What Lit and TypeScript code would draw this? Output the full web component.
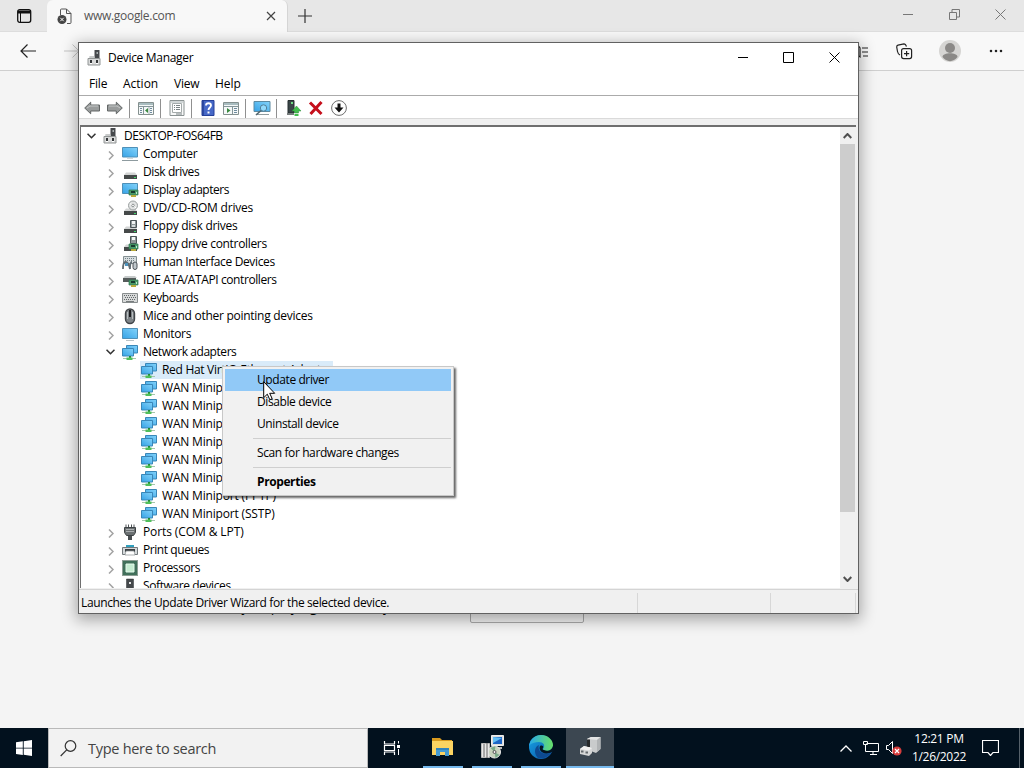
import { LitElement, html, css, svg } from "lit";
import { customElement, property } from "lit/decorators.js";

const monitor = svg`<defs><linearGradient id="m" x1="0" y1="1" x2="1" y2="0"><stop offset="0" stop-color="#35a2e6"/><stop offset="1" stop-color="#84d3fa"/></linearGradient></defs>`;
const drive = svg`<path d="M2 11 4 8.500h9l2 2.500z" fill="#d2d4d4"/><path d="M2 11h13v4H2z" fill="#454949"/><path d="M12 13h2v1h-2z" fill="#42d66b"/>`;
const card = svg`<path d="M7 8h9v5H7z" fill="#4a9a68" stroke="#2c7550" stroke-width=".7"/><path d="M9 13h5v2H9z" fill="#b8aa3c"/><path d="M9 9h4v2H9z" fill="#173d30"/><path d="M14 10h1v2h-1z" fill="#b8e9cc"/>`;
const panes = svg`<path d="M.5 2.500h15v12H.5z" fill="#f5f8f8" stroke="#84908f"/><path d="M1 3h14v2H1z" fill="#a9bdc0"/><path d="M1 6.500h14" stroke="#849599"/>`;

const icons: Record<string, unknown> = {
  manager: svg`<path d="M7.500 0h5v8h-5z" fill="#46494c"/><path d="M9.500 2H11v2H9.500z" fill="#a8afb0"/><path d="M2.500 6H7l1 3H2z" fill="#c8caca"/><path d="M1 8.500h12V15H1z" fill="#d9dada" stroke="#929696"/><path d="M3 10h2v3H3zM9 10h2v3H9z" fill="#333638"/><path d="M3 13h2v1H3zM9 13h2v1H9z" fill="#fff"/>`,
  computer: svg`${monitor}<path d="M.5 1.500h15v9.500H.5z" fill="url(#m)" stroke="#4f90b8"/><path d="M5 12.500h6" stroke="#d3d8d9"/><path d="M0 14.500h16" stroke="#8e9b9f"/>`,
  monitor: svg`${monitor}<path d="M.5 2.500h15v10H.5z" fill="url(#m)" stroke="#4f90b8"/><path d="M4 14.500h8" stroke="#b9c3c7"/>`,
  disk: drive,
  display: svg`${monitor}<path d="M.5 1.500h15v10H.5z" fill="url(#m)" stroke="#4f90b8"/>${card}`,
  dvd: svg`${drive}<circle cx="11" cy="5.500" r="4.500" fill="#e1e3e3" stroke="#9ba0a0"/><path d="m8 3.500 2 1.500M12 6l2 2" stroke="#fff"/><circle cx="11" cy="5.500" r="1.300" fill="#fff" stroke="#8d9292"/>`,
  floppy: svg`${drive}<path d="M8.500 2.500h6v7h-6z" fill="#8f9799" stroke="#4c5558"/><path d="M10 3h3v3h-3z" fill="#f2f4f4"/><path d="M10 7h3v2h-3z" fill="#d5dbdc"/>`,
  floppyctl: svg`${drive}<path d="M8.500.5h6v7h-6z" fill="#8f9799" stroke="#4c5558"/><path d="M10 1h3v3h-3z" fill="#f2f4f4"/>${card}`,
  hid: svg`<path d="M1.500 2.500h13v7h-13z" fill="#d7dddf" stroke="#849093"/><path d="M3 4.500h10M3 6.500h10" stroke="#718187" stroke-dasharray="1 1"/><path d="M1 15c0-5 1-7 2.500-7S7 10 8 15M8 15c0-5 1-7 2-7" fill="none" stroke="#5f6b72" stroke-width="1.800"/><path d="M3 9h3v3H3z" fill="#4f94bd"/><rect x="11" y="8" width="4" height="7.500" rx="2" fill="#bec6cb" stroke="#4c5358"/>`,
  ide: svg`<path d="m1 6 2-2h10l2 2z" fill="#c6caca"/><path d="M1 6h13v4H1z" fill="#555b5b"/>${card}`,
  keyboard: svg`<path d="M.5 3.500h15v9H.5z" fill="#d7d9d9" stroke="#888d8e"/><path d="M2 5.500h12M3 7.500h11M2 9.500h12" stroke="#616769" stroke-dasharray="1 1"/><path d="M4 11.500h8" stroke="#777c7d"/>`,
  mouse: svg`<rect x="3.500" y="1" width="9" height="14.500" rx="4.500" fill="#7e8488" stroke="#414549" stroke-width="1.400"/><path d="M5.500 4v7M10.500 4v7" stroke="#b8bdbf"/><path d="M8 2v7" stroke="#1c1e20" stroke-width="2"/>`,
  network: svg`${monitor}<path d="M4.500 1.500h11v7.500h-11z" fill="url(#m)" stroke="#3a87b8"/><path d="M.5 4.500h11V12H.5z" fill="url(#m)" stroke="#3a87b8"/><path d="M7 12h2v2H7z" fill="#218d36"/><path d="M1 14.500h13" stroke="#a5c8ab"/><path d="M4.500 13.500h6V16h-6z" fill="#4fbf5a"/>`,
  port: svg`<path d="M4 .5v3M6.500.5v3M9.500.5v3M12 .5v3" stroke="#505558"/><path d="M2.500 3.500h11v5l-2 3h-7l-2-3z" fill="#6b7072" stroke="#3d4244"/><path d="M4 5.500h8M4 7.500h8" stroke="#aaaeb0"/><path d="M6 12h4v4H6z" fill="#494e51"/>`,
  printer: svg`<path d="M4 3h8v4H4z" fill="#2f9fbd"/><path d="M.5 5.500h15v7H.5z" fill="#d4d8da" stroke="#72797c"/><path d="M3 7h10v3H3z" fill="#383e41"/><path d="M4 9h8l1 4H3z" fill="#fff" stroke="#899092" stroke-width=".7"/>`,
  cpu: svg`<path d="M1 1h14v14H1z" fill="#41705a"/><path d="M.5.5h15v15H.5z" fill="none" stroke="#183d29" stroke-dasharray="1 1"/><path d="M4 4h8v8H4z" fill="#c5ecd1" stroke="#e4faeb"/>`,
  software: svg`<path d="M4.500 1h7v15h-7z" fill="#44484b" stroke="#2d3033" stroke-width=".5"/><path d="M7 4h2v2H7z" fill="#e5e6e7"/>`,
  left: svg`<path d="m.7 8 6-5.800V5h8.800v6H6.700v2.800z" fill="#999c9c" stroke="#626666"/><path d="m3 8 3-2h8" stroke="#c6c8c8" fill="none"/>`,
  right: svg`<path d="m15.300 8-6-5.800V5H.5v6h8.800v2.800z" fill="#999c9c" stroke="#626666"/><path d="M2 6h8l3 2" stroke="#c6c8c8" fill="none"/>`,
  tree: svg`${panes}<path d="M5.500 7v7" stroke="#849599"/><path d="M2 8.500h2M2 10.500h2M2 12.500h2M12 8.500h2M12 10.500h2M12 12.500h2" stroke="#6f8b9e"/><path d="M10 8v5L7 10.500z" fill="#38883e"/><path d="M11 7v7" stroke="#a8b6b9"/>`,
  actionpane: svg`${panes}<path d="M9.500 7v7" stroke="#849599"/><path d="M11 8.500h3M11 10.500h3M11 12.500h3" stroke="#6f8b9e"/><path d="M4 8v5l3.500-2.500z" fill="#38883e"/>`,
  props: svg`<path d="M1 .5h14v15H1z" fill="#f7f8f8" stroke="#8a9292"/><path d="M3.500 3.500h9v9h-9z" fill="#fff" stroke="#a4abab"/><path d="M2 2h12" stroke="#a9b3b5"/><path d="M5 5.500h1M7 5.500h4M5 7.500h1M7 7.500h4M5 9.500h1M7 9.500h4M7 14h6" stroke="#798284"/>`,
  help: svg`<path d="M2 .5h12v15H2z" fill="#4668c7" stroke="#243f99"/><path d="M3 1v14" stroke="#253f96" stroke-width="1.500"/><path d="M6 5.500C6 2.500 11 2.500 11 5.500c0 2-2.500 2-2.500 4.500" stroke="#fff" stroke-width="1.800" fill="none"/><path d="M7.500 11.500h2v2h-2z" fill="#fff"/>`,
  scan: svg`${monitor}<path d="M0 1.500h16v10H0z" fill="url(#m)" stroke="#5d8aa1"/><path d="M2 14.500h13" stroke="#919b9e"/><circle cx="9.500" cy="8" r="3.200" fill="#a4e4ff" fill-opacity=".75" stroke="#51809a"/><path d="m7 10.500-5 4.500" stroke="#51666f" stroke-width="1.600"/>`,
  update: svg`<path d="M3 .5h6V13H3z" fill="#3b4648" stroke="#242d2e"/><path d="M6 2h2v2H6z" fill="#70da84"/><path d="M2 13h7v2H2z" fill="#777d7d"/><path d="m11.500 6 4.500 5h-2.500v2h-4v-2H7z" fill="#43be4e" stroke="#2a8b36" stroke-width=".5"/><path d="M9.500 15h4" stroke="#43be4e" stroke-width="2"/>`,
  remove: svg`<path d="M2 2.500 13.500 14M13.500 2 2.500 14" stroke="#c50f1c" stroke-width="3"/>`,
  disable: svg`<circle cx="8" cy="8" r="7.400" fill="#fff" stroke="#6e6e6e"/><path d="M6.500 3.500h3v4h3L8 12.500 3.500 7.500h3z" fill="#111"/>`,
  cursor: svg`<path d="M.7.700v16l3.600-3.500 2.500 5.500 2.400-1-2.500-5.400h5z" fill="#fff" stroke="#000"/>`,
  avatar: svg`<circle cx="11" cy="11" r="11" fill="#d6d5d3"/><circle cx="11" cy="8" r="5" fill="#8b8987"/><path d="M3.500 17c0-5 15-5 15 0-4 5.500-11 5.500-15 0z" fill="#8b8987"/>`,
  start: svg`<path d="m0 2.300 6.800-1v6.400H0zM7.700 1.200 16 0v7.700H7.700zM0 8.600h6.800V15L0 14zM7.700 8.600H16V16l-8.300-1.200z" fill="#fff"/>`,
  taskview: svg`<path d="M.5 1v3h10V1M.5 15v-3h10v3M.5 5.500h10v5H.5z" fill="none" stroke="#fff" stroke-width="1.200"/><path d="M14.500 1v2.500M14.500 9v6" stroke="#fff"/><path d="M13 5h3v3h-3z" fill="#fff"/>`,
  explorer: svg`<path d="M1 3h8l2 2h10v4H1z" fill="#d99b1f"/><path d="M1 6h21v14H1z" fill="#fcd462"/><path d="M5 21v-8h13v8h-4v-4H9v4z" fill="#459bd2"/><path d="M5 13h13v2H5z" fill="#3284bd"/>`,
  installer: svg`<path d="M11.500.5h12v10h-12z" fill="#ddd" stroke="#eee"/><path d="M13 2h9v7h-9z" fill="#1c65c6"/><path d="m13 2 9 1-9 5z" fill="#64bff5"/><path d="M14 12h8v2h-8z" fill="#bbb"/><path d="M1.500 8.500h8v14h-8z" fill="#e9e9e9" stroke="#bbb"/><path d="M4 9v13M7 8v15" stroke="#666"/><circle cx="14.500" cy="17" r="6" fill="#c6d3bd" stroke="#e9e9e9"/><path d="m14.500 17-4-4 5-2M14.500 17l5 3-4 3" fill="#78aa89"/><circle cx="14.500" cy="17" r="1.500" fill="#eee" stroke="#555"/>`,
  edge: svg`<defs><linearGradient id="ea"><stop stop-color="#27a8ec"/><stop offset="1" stop-color="#68df67"/></linearGradient><linearGradient id="eb" y2="1"><stop stop-color="#17a4e5"/><stop offset="1" stop-color="#0b52a5"/></linearGradient></defs><circle cx="12" cy="12" r="12" fill="url(#eb)"/><path d="M0 11C1 4 6 0 12 0c7 0 12 5 12 10 0 4-3 6-7 6-3 0-4-1-3-2 3-4 0-7-4-7C6 7 2 8 0 11z" fill="url(#ea)"/><path d="M9 23C4 18 6 11 10 10c-2 5 3 11 12 8-3 4-7 6-13 5z" fill="#0d4a92"/><path d="M11 11c-2 5 4 10 12 6l2-1-1-5c-1 4-5 6-9 4-1 0-2-1-1-2 1-2-1-3-3-2z" fill="#041522"/>`,
  devices: svg`<path d="m9 4 4-2h9.500v12L18 18l-8-3z" fill="#c9cbcc"/><path d="m9 4 4-2h9.500L19 5z" fill="#e4e5e5"/><path d="M19 5l3.500-3v12L19 17z" fill="#b0b3b5"/><path d="M9 4.500h3V12H9z" fill="#26292b"/><path d="m2 14 4-3 8 2v5l-3 3-9-2z" fill="#d5d6d6"/><path d="m2 14 4-3 8 2-3 2.500z" fill="#f0f0f0"/><path d="M3 15.500h2.500v2H3zM7.500 16.500H10v2H7.500z" fill="#63686b"/>`,
};

@customElement("ui-icon")
class UiIcon extends LitElement {
  @property() name = "";
  @property({ type: Number }) w = 16;
  @property({ type: Number }) h = 0;
  static styles = css`:host { display: inline-flex; flex: none; } svg { display: block; overflow: visible; }`;
  render() {
    return html`<svg width=${this.w} height=${this.h || this.w} viewBox="0 0 ${this.w} ${this.h || this.w}">${icons[this.name]}</svg>`;
  }
}

// icon, label, tracking in px
type Entry = [string, string, number];
const categories: Entry[] = [
  ["computer", "Computer", -.25], ["disk", "Disk drives", -.4], ["display", "Display adapters", -.45],
  ["dvd", "DVD/CD-ROM drives", -.2], ["floppy", "Floppy disk drives", -.28], ["floppyctl", "Floppy drive controllers", -.32],
  ["hid", "Human Interface Devices", -.36], ["ide", "IDE ATA/ATAPI controllers", -.4], ["keyboard", "Keyboards", -.45],
  ["mouse", "Mice and other pointing devices", -.27], ["monitor", "Monitors", -.3],
];
const adapters = ["Red Hat VirtIO Ethernet Adapter", "WAN Miniport (IKEv2)", "WAN Miniport (IP)", "WAN Miniport (IPv6)",
  "WAN Miniport (L2TP)", "WAN Miniport (Network Monitor)", "WAN Miniport (PPPOE)", "WAN Miniport (PPTP)", "WAN Miniport (SSTP)"];
const tail: Entry[] = [["port", "Ports (COM & LPT)", -.1], ["printer", "Print queues", -.43], ["cpu", "Processors", -.4], ["software", "Software devices", -.4]];
const tools = ["left", "right", "|", "tree", "|", "props", "|", "help", "actionpane", "|", "scan", "|", "update", "remove", "disable"];

@customElement("app-root")
class AppRoot extends LitElement {
  static styles = css`
    :host { display: block; width: 1024px; height: 768px; overflow: hidden; position: relative; font: 12px/18px "Open Sans", "Noto Sans", sans-serif; font-stretch: 92%; color: #000; background: #f4f4f4; }
    * { box-sizing: border-box; }
    svg { display: block; flex: none; fill: none; stroke: currentColor; }
    .desktop { display: flex; flex-direction: column; height: 768px; }
    .tabs { height: 32px; flex: none; background: #e7e7e7; display: flex; border-bottom: 1px solid #ddd; }
    .tabact { width: 47px; padding: 9px 0 0 17px; }
    .tab { width: 241px; height: 32px; background: #f8f8f8; border-radius: 6px 6px 0 0; display: flex; align-items: center; padding: 0 11px 0 10px; color: #555; border-right: 1px solid #d5d5d5; }
    .tab span { flex: 1; padding-left: 10px; letter-spacing: -.3px; }
    .plus { padding: 9px 0 0 10px; flex: 1; color: #333; }
    .wbtns { display: flex; gap: 35px; padding: 9px 18px 0 0; color: #777; }
    .nav { height: 39px; flex: none; background: #f8f8f8; border-bottom: 1px solid #cfcfcf; display: flex; align-items: center; padding: 0 21px 0 20px; }
    .nav .gap { flex: 1; }
    .nav .fav { margin-right: 27px; }
    .nav .coll { margin-right: 26px; }
    .nav ui-icon { margin-right: 28px; }
    .page { flex: 1; min-height: 0; padding: 529px 0 0 222px; display: flex; align-items: flex-start; font-size: 14px; line-height: 19px; }
    .page .q { width: 248px; white-space: nowrap; margin-top: -4px; padding-left: 6px; }
    .page .btn { width: 114px; height: 23px; border: 1px solid #aaa; border-radius: 2px; text-align: center; font-size: 13px; line-height: 11px; }
    .taskbar { height: 40px; flex: none; background: #02111e; display: flex; color: #fff; }
    .start { width: 48px; display: grid; place-items: center; }
    .search { width: 320px; background: #f2f2f2; border: 1px solid #b9b9b9; display: flex; align-items: center; padding: 2px 0 0 11px; color: #444; font-size: 14.500px; letter-spacing: -.28px; }
    .search svg { margin-top: -2px; }
    .search span { padding-left: 11px; }
    .apps { display: flex; margin-left: -1px; }
    .app { width: 40px; margin: 0 4.500px; height: 40px; border-bottom: 2px solid #76b9ed; display: grid; place-items: center; }
    .app.tv { border: 0; margin-right: 6.500px; }
    .app.active { width: 48px; margin: 0 0 0 1px; background: #3c4751; }
    .tray { margin-left: auto; display: flex; align-items: center; }
    .caret { margin-right: 1px; }
    .net { margin: 0 -2px 0 1px; }
    .clock { text-align: center; width: 58px; line-height: 18px; white-space: nowrap; margin: 0 14px 0 6px; letter-spacing: -.3px; }
    .clock div { display: flex; justify-content: center; }
    .show { width: 5px; height: 40px; border-left: 1px solid #56616a; margin-left: 20px; }
    .window { position: absolute; left: 78px; top: 42px; width: 781px; height: 572px; background: #fff; border: 1px solid #616161; box-shadow: 0 4px 14px 2px rgba(0,0,0,.32); display: flex; flex-direction: column; }
    .title { height: 30px; display: flex; align-items: center; padding: 0 18px 0 8px; }
    .title ui-icon { margin-top: -1px; }
    .title .name { flex: 1; padding-left: 5px; letter-spacing: -.32px; }
    .title .ctl { display: flex; gap: 35px; margin-top: -2px; }
    .menu { height: 23px; display: flex; align-items: center; padding-left: 10px; border-bottom: 1px solid #ababab; }
    .menu span { flex: none; white-space: nowrap; }
    .m0 { width: 34px; letter-spacing: -.2px; } .m1 { width: 51px; } .m2 { width: 41px; letter-spacing: -.2px; }
    .tools { height: 23px; display: flex; align-items: center; padding: 2px 0 0 5px; border-bottom: 1px solid #dadada; }
    .tools ui-icon { margin-right: 7px; }
    .sep { width: 1px; height: 19px; background: #909090; margin: 0 8px 0 -1px; }
    .body { height: 470px; background: #f0f0f0; padding: 6px 2px 0 1px; display: flex; }
    .tree { flex: 1; background: #fff; border: 1px solid #6f6f6f; border-top-width: 2px; border-bottom: 0; border-right: 0; display: flex; height: 463px; overflow: hidden; }
    .rows { flex: 1; }
    .row { height: 18px; display: flex; align-items: center; white-space: nowrap; padding-left: 24px; }
    .row.root { padding-left: 5px; }
    .row.leaf { padding-left: 59px; }
    .row .tw { width: 11px; margin-right: 6px; display: grid; place-items: center; color: #a2a2a2; padding-top: 2px; }
    .row .tw.open { color: #333; padding-top: 0; }
    .row .tx { padding-left: 5px; }
    .leaf .hit { display: flex; align-items: center; height: 18px; padding-left: 1px; }
    .leaf.sel .hit { background: #d9ebf9; width: 193px; }
    .sb { width: 16px; background: #f0f0f0; display: flex; flex-direction: column; align-items: center; color: #505050; padding-right: 1px; }
    .sb .thumb { width: 15px; height: 368px; background: #cdcdcd; margin: 5px 0 64px; flex: none; }
    .sb .up { margin-top: 6px; }
    .status { height: 24px; background: #f0f0f0; border-top: 1px solid #d4d4d4; display: flex; padding: 3px 2px 0; line-height: 20px; letter-spacing: -.38px; }
    .status div { border-right: 1px solid #d7d7d7; height: 20px; white-space: nowrap; }
    .s1 { width: 557px; } .s2 { width: 133px; } .s3 { width: 85px; }
    .ctx { position: absolute; left: 222px; top: 366px; width: 232px; height: 130px; background: #f1f1f1; border: 1px solid #c8c8c8; box-shadow: 2px 2px 2px rgba(0,0,0,.6); padding: 2px; }
    .item { height: 22px; line-height: 22px; padding-left: 32px; white-space: nowrap; letter-spacing: -.4px; }
    .item.hot { background: #91c9f7; }
    .item.bold { font-weight: 700; }
    .rule { height: 1px; background: #cfcfcf; margin: 3px 0 3px 28px; }
    .pointer { position: absolute; left: 263px; top: 381px; }
  `;
  row(icon: string, label: string, tracking: number, kind = "", open = false) {
    return html`<div class="row ${kind}"><span class="tw ${open ? "open" : ""}">${open
      ? html`<svg width="9" height="6" stroke-width="1.600"><path d="m.5.700 4 4 4-4"/></svg>`
      : html`<svg width="6" height="9" stroke-width="1.500"><path d="m1 .5 4 4-4 4"/></svg>`}</span><ui-icon name=${icon}></ui-icon><span class="tx" style="letter-spacing:${tracking}px">${label}</span></div>`;
  }
  render() {
    return html`
      <div class="desktop">
        <div class="tabs">
          <div class="tabact"><svg width="15" height="15" color="#111"><rect x=".7" y=".7" width="13" height="12.600" rx="2" stroke-width="1.300"/><path d="M1 3h12.500" stroke-width="3"/><path d="M3.500 3v10" stroke-width="1"/></svg></div>
          <div class="tab"><svg width="17" height="17" color="#555"><path d="M3.500 7V2q0-1 1-1h5l4.500 4.500v9q0 1-1 1h-3M9.500 1v4.500H14"/><circle cx="5" cy="11.500" r="4.500" fill="#444" stroke="none"/><path d="m3.300 9.800 3.400 3.400m0-3.400-3.400 3.400" stroke="#fff"/></svg><span>www.google.com</span><svg width="10" height="10" color="#444" stroke-width="1.200"><path d="m1 1 8 8m0-8-8 8"/></svg></div>
          <div class="plus"><svg width="14" height="14"><path d="M7 0v14M0 7h14" stroke-width="1.200"/></svg></div>
          <div class="wbtns"><svg width="11" height="12"><path d="M0 5.500h10"/></svg><svg width="11" height="12"><path d="M.5 3.500h7v7h-7zM3 3V.5h7.500v7.500H8"/></svg><svg width="11" height="11"><path d="m.5.5 10 10m0-10-10 10"/></svg></div>
        </div>
        <div class="nav">
          <svg width="16" height="14" color="#222"><path d="M16 7H1m6.500-6.500L1 7l6.500 6.500" stroke-width="1.200"/></svg>
          <svg width="60" height="14" color="#c4c4c4"><path d="M28 7h15M36.500.5 43 7l-6.500 6.500"/></svg>
          <span class="gap"></span>
          <svg class="fav" width="20" height="15" color="#222"><path d="m1 4 5 0 2-4 3 4v9l-3-2M13 4h6M13 8h6M14 12h5" stroke-width="1.200"/></svg>
          <svg class="coll" width="17" height="17" color="#222" stroke-width="1.200"><path d="M4 12Q2 11 1.500 8.500L.7 4Q.7 2.500 2 2.200L8 .8Q9.500.7 10.500 3.500"/><rect x="5.600" y="5.600" width="10" height="10" rx="2"/><path d="M10.600 8v5.200M8 10.600h5.200"/></svg>
          <ui-icon name="avatar" .w=${22}></ui-icon>
          <svg width="14" height="4" color="#222"><path d="M2 2h0M7 2h0M12 2h0" stroke-linecap="round" stroke-width="2.600"/></svg>
        </div>
        <div class="page"><div class="q">Try displaying it correctly</div><div class="btn">Settings</div></div>
        <div class="taskbar">
          <div class="start"><ui-icon name="start"></ui-icon></div>
          <div class="search"><svg width="17" height="17" color="#333"><circle cx="10.500" cy="6" r="5.300" stroke-width="1.200"/><path d="M6.700 9.800.7 16" stroke-width="1.200"/></svg><span>Type here to search</span></div>
          <div class="apps">
            <div class="app tv"><ui-icon name="taskview"></ui-icon></div>
            <div class="app"><ui-icon name="explorer" .w=${24}></ui-icon></div>
            <div class="app"><ui-icon name="installer" .w=${24}></ui-icon></div>
            <div class="app"><ui-icon name="edge" .w=${24}></ui-icon></div>
            <div class="app active"><ui-icon name="devices" .w=${24}></ui-icon></div>
          </div>
          <div class="tray">
            <svg class="caret" width="12" height="7"><path d="m.5 6.500 5.500-5.500 5.500 5.500" stroke-width="1.300"/></svg>
            <svg class="net" width="26" height="15"><path d="M12.500 2.500h12v8h-13v-5M16 13.500h7M19 11v3M9.500.5h4v3h-4zM11.500 4v2" /></svg>
            <svg width="26" height="16"><path d="M8.500 5.500h2l4-4v12l-4-4h-2z"/><circle cx="19" cy="11" r="4.600" fill="#d63c3c" stroke="none"/><path d="m17 9 4 4m0-4-4 4" stroke-width="1.200"/></svg>
            <div class="clock"><div>12:21 PM</div><div>1/26/2022</div></div>
            <svg width="17" height="16"><path d="M.5.500h16v12H11l-2.500 3-2.500-3H.5z" stroke-width="1.200"/></svg>
            <div class="show"></div>
          </div>
        </div>
      </div>
      <div class="window">
        <div class="title"><ui-icon name="manager"></ui-icon><span class="name">Device Manager</span>
          <div class="ctl"><svg width="10" height="11"><path d="M0 5.500h10"/></svg><svg width="11" height="11"><path d="M.5.5h10v10H.5z"/></svg><svg width="11" height="11"><path d="m.5.5 10 10m0-10-10 10"/></svg></div></div>
        <div class="menu"><span class="m0">File</span><span class="m1">Action</span><span class="m2">View</span><span>Help</span></div>
        <div class="tools">${tools.map((t) => t === "|" ? html`<span class="sep"></span>` : html`<ui-icon name=${t}></ui-icon>`)}</div>
        <div class="body"><div class="tree"><div class="rows">
          ${this.row("manager", "DESKTOP-FOS64FB", -.5, "root", true)}
          ${categories.map(([i, l, t]) => this.row(i, l, t))}
          ${this.row("network", "Network adapters", -.45, "", true)}
          ${adapters.map((a, i) => html`<div class="row leaf ${i ? "" : "sel"}"><div class="hit"><ui-icon name="network"></ui-icon><span class="tx" style="letter-spacing:${i ? -.18 : -.3}px">${a}</span></div></div>`)}
          ${tail.map(([i, l, t]) => this.row(i, l, t))}
        </div><div class="sb"><svg class="up" width="9" height="6" stroke-width="2"><path d="m.7 5 3.800-4 3.800 4"/></svg><div class="thumb"></div><svg width="9" height="6" stroke-width="2"><path d="m.7 1 3.800 4 3.800-4"/></svg></div></div></div>
        <div class="status"><div class="s1">Launches the Update Driver Wizard for the selected device.</div><div class="s2"></div><div class="s3"></div></div>
      </div>
      <div class="ctx">
        <div class="item hot">Update driver</div><div class="item">Disable device</div><div class="item">Uninstall device</div><div class="rule"></div>
        <div class="item">Scan for hardware changes</div><div class="rule"></div><div class="item bold">Properties</div>
      </div>
      <ui-icon class="pointer" name="cursor" .w=${13} .h=${20}></ui-icon>`;
  }
}
